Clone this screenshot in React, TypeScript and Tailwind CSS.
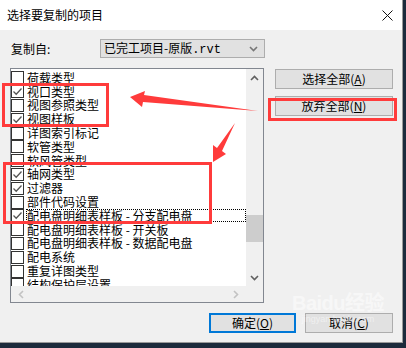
import React from 'react';

// Revit "选择要复制的项目" dialog with red annotation marks

const FONT = { fontFamily: '"Noto Sans CJK SC", "Liberation Sans", sans-serif' };

const ITEMS: { label: string; checked: boolean; focus?: boolean }[] = [
  { label: '荷载类型', checked: false },
  { label: '视口类型', checked: true },
  { label: '视图参照类型', checked: false },
  { label: '视图样板', checked: true },
  { label: '详图索引标记', checked: false },
  { label: '软管类型', checked: false },
  { label: '软风管类型', checked: false },
  { label: '轴网类型', checked: true },
  { label: '过滤器', checked: true },
  { label: '部件代码设置', checked: false },
  { label: '配电盘明细表样板 - 分支配电盘', checked: true, focus: true },
  { label: '配电盘明细表样板 - 开关板', checked: false },
  { label: '配电盘明细表样板 - 数据配电盘', checked: false },
  { label: '配电系统', checked: false },
  { label: '重复详图类型', checked: false },
  { label: '结构保护层设置', checked: false },
];

function CheckBox({ checked }: { checked: boolean }) {
  return (
    <span className="w-[13px] h-[13px] shrink-0 border border-[#333] bg-white flex items-center justify-center">
      {checked && (
        <svg width="11" height="11" viewBox="0 0 11 11" aria-hidden>
          <path d="M1.5 5.5 L4.2 8.2 L9.5 2.5" fill="none" stroke="#555" strokeWidth="1.3" />
        </svg>
      )}
    </span>
  );
}

function Chevron({ dir, color }: { dir: 'up' | 'down' | 'left' | 'right'; color: string }) {
  const d = {
    up: 'M1 6 L4.5 2.5 L8 6',
    down: 'M1 3 L4.5 6.5 L8 3',
    left: 'M6 1 L2.5 4.5 L6 8',
    right: 'M3 1 L6.5 4.5 L3 8',
  }[dir];
  return (
    <svg width="9" height="9" viewBox="0 0 9 9" aria-hidden>
      <path d={d} fill="none" stroke={color} strokeWidth="1.6" />
    </svg>
  );
}

function DlgButton({ children, primary }: { children: React.ReactNode; primary?: boolean }) {
  return (
    <div
      className={
        'h-[20px] flex items-center justify-center bg-[#e1e1e1] text-[12px] text-black ' +
        (primary ? 'border-2 border-[#0078d7]' : 'border border-[#adadad]')
      }
    >
      {children}
    </div>
  );
}

export default function App() {
  return (
    <div className="relative w-[406px] h-[348px] overflow-hidden bg-[#1c2b3c] flex items-start" style={FONT}>
      <div className="w-[403px] h-[343px] bg-[#f0f0f0] border-r border-b border-[#9a9a9a] flex flex-col">
        {/* title bar */}
        <div className="h-[30px] bg-white flex items-center justify-between pl-[7px] pr-[9px] shrink-0">
          <span className="text-[12px] text-black leading-none">选择要复制的项目</span>
          <svg width="11" height="11" viewBox="0 0 11 11" aria-hidden>
            <path d="M0.5 0.5 L10.5 10.5 M10.5 0.5 L0.5 10.5" stroke="#111" strokeWidth="1" />
          </svg>
        </div>

        {/* source row */}
        <div className="mt-[9px] h-[19px] flex items-center pl-[11px]">
          <span className="w-[89px] text-[12px] text-black">复制自:</span>
          <div className="w-[165px] h-[19px] bg-[#e1e1e1] border border-[#adadad] flex items-center justify-between pl-[3px] pr-[6px]">
            <span className="text-[12px] text-black leading-none">
              已完工项目-原版<span style={{ fontFamily: '"Liberation Mono", monospace' }}>.rvt</span>
            </span>
            <Chevron dir="down" color="#777" />
          </div>
        </div>

        {/* list + side buttons */}
        <div className="mt-[10px] flex pl-[10px]">
          <div className="w-[254px] h-[235px] border border-[#828790] bg-white flex flex-col">
            <div className="flex h-[217px]">
              <div className="w-[235px] overflow-hidden pt-[2px]">
                {ITEMS.map((it) => (
                  <div key={it.label} className="h-[13.8px] flex items-center">
                    <CheckBox checked={it.checked} />
                    <span
                      className={
                        'ml-[2px] h-[13px] flex items-center text-[12px] text-black whitespace-nowrap leading-none ' +
                        (it.focus ? 'flex-1 border border-dotted border-black' : 'border border-transparent')
                      }
                    >
                      {it.label}
                    </span>
                  </div>
                ))}
              </div>
              <div className="w-[17px] bg-[#f0f0f0] flex flex-col items-center">
                <div className="h-[17px] flex items-center justify-center mt-[1px]">
                  <Chevron dir="up" color="#606060" />
                </div>
                <div className="flex-1 w-full relative">
                  <div className="absolute left-0 right-0 top-[128px] h-[27px] bg-[#cdcdcd]" />
                </div>
                <div className="h-[17px] flex items-center justify-center">
                  <Chevron dir="down" color="#606060" />
                </div>
              </div>
            </div>
            <div className="h-[16px] bg-[#f0f0f0] flex">
              <div className="w-[235px] flex items-center justify-between px-[6px]">
                <Chevron dir="left" color="#c2c2c2" />
                <Chevron dir="right" color="#c2c2c2" />
              </div>
              <div className="w-[17px]" />
            </div>
          </div>

          <div className="ml-[11px] w-[118px] mt-[1px] flex flex-col gap-[7px]">
            <DlgButton>选择全部(<u>A</u>)</DlgButton>
            <DlgButton>放弃全部(<u>N</u>)</DlgButton>
          </div>
        </div>

        {/* footer buttons */}
        <div className="mt-[10px] flex pl-[209px] gap-[9px]">
          <div className="w-[87px]">
            <DlgButton primary>确定(<u>O</u>)</DlgButton>
          </div>
          <div className="w-[88px]">
            <DlgButton>取消(<u>C</u>)</DlgButton>
          </div>
        </div>
      </div>

      {/* annotation marks */}
      <div className="absolute left-[2px] top-[83px] w-[107px] h-[44px] border-[3px] border-[#ff3b3b]" />
      <div className="absolute left-[3px] top-[162px] w-[209px] h-[62px] border-[3px] border-[#ff3b3b]" />
      <div className="absolute left-[268px] top-[98px] w-[129px] h-[23px] border-[3px] border-[#ff3b3b]" />
      <svg className="absolute inset-0 pointer-events-none" width="406" height="348" aria-hidden>
        <polygon points="130,97 145,91 144,95 258,111 143,102 142,107" fill="#ff3b3b" />
        <polygon points="235,123 222,151 226,154 213,162 213,145 217,148" fill="#ff3b3b" />
      </svg>

      {/* watermark */}
      <div className="absolute left-[292px] top-[292px] flex flex-col items-center pointer-events-none opacity-50">
        <span className="text-[20px] font-bold text-white leading-none tracking-tight" style={{ fontFamily: '"Liberation Sans", sans-serif' }}>
          Baidu<span style={FONT}>经验</span>
        </span>
        <span className="text-[9px] text-white leading-none mt-[2px]" style={{ fontFamily: '"Liberation Sans", sans-serif' }}>
          jingyan.baidu.com
        </span>
      </div>
    </div>
  );
}
